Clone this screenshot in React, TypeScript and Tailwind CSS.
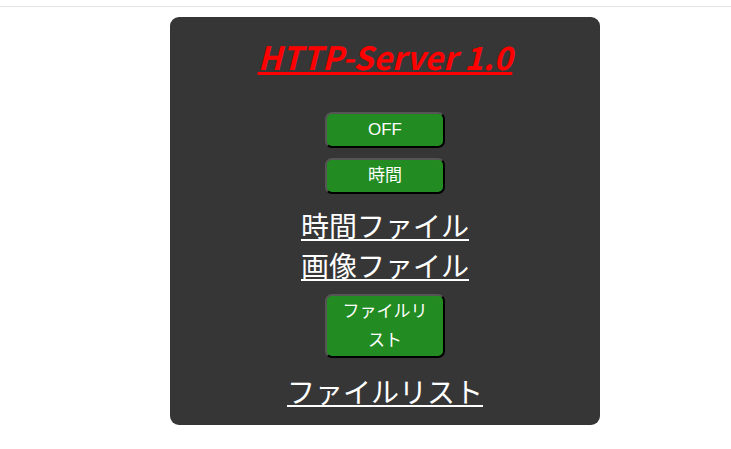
import React from 'react';

const font = { fontFamily: '"Noto Sans CJK JP", "Noto Sans", sans-serif' };

const Btn = ({ children, className = '' }: { children: React.ReactNode; className?: string }) => (
  <button
    className={`w-[120px] rounded-[7px] border-2 border-t-[#555] border-l-[#555] border-r-black border-b-black bg-[#228b22] text-[17px] text-white ${className}`}
    style={{ fontFamily: '"Liberation Sans", "Noto Sans CJK JP", sans-serif' }}
  >
    {children}
  </button>
);

export default function App() {
  return (
    <div className="min-h-screen bg-white" style={font}>
      <div className="pt-[6px]">
        <div className="border-t border-[#e5e5e5]" />
      </div>
      <div className="ml-[170px] mt-[10px] flex w-[430px] flex-col items-center rounded-[9px] bg-[#363636] pt-[17px] pb-[14px]">
        <h1 className="text-[32px] font-bold italic leading-[44px] text-[#ff0000] underline">HTTP-Server 1.0</h1>
        <Btn className="mt-[34px] h-[36px]">OFF</Btn>
        <Btn className="mt-[10px] h-[36px]">時間</Btn>
        <a className="mt-[11px] text-[28px] leading-[40px] text-white underline">時間ファイル</a>
        <a className="text-[28px] leading-[40px] text-white underline">画像ファイル</a>
        <Btn className="mt-[9px] px-[14px] py-[1px] leading-[29px]">ファイルリスト</Btn>
        <a className="mt-[13px] text-[28px] leading-[40px] text-white underline">ファイルリスト</a>
      </div>
    </div>
  );
}
